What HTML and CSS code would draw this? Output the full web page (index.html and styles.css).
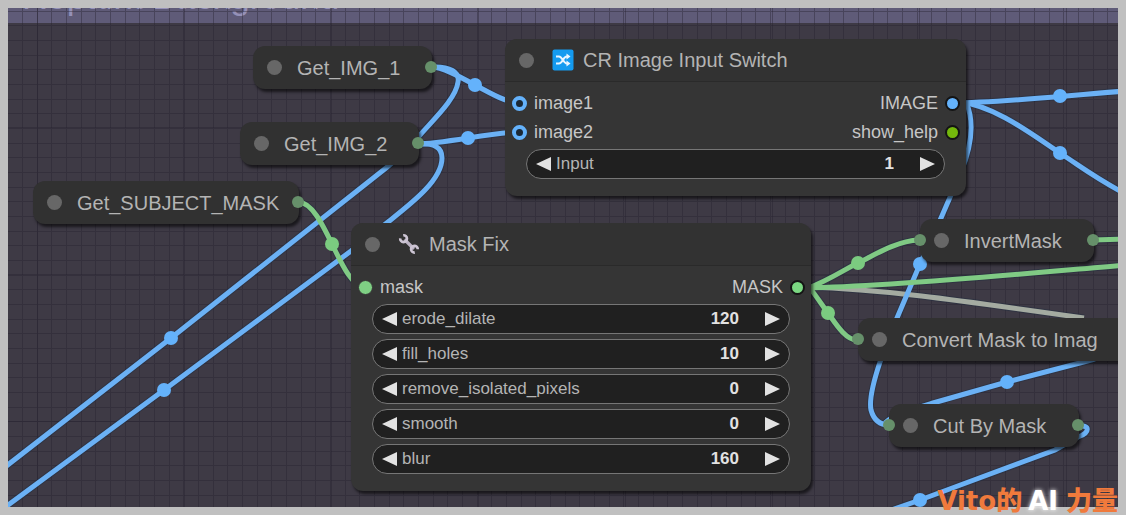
FILE: index.html
```html
<!DOCTYPE html>
<html lang="en">
<head>
<meta charset="utf-8">
<title>Node graph</title>
<link rel="stylesheet" href="styles.css">
</head>
<body>
<main class="canvas">
  <h1 class="group-title">Repaint Background</h1>

  <svg class="links" aria-hidden="true">
    <defs>
      <pattern id="grid" width="44" height="44" x="22" y="40" patternUnits="userSpaceOnUse">
        <path class="grid-line" d="M.5 0V44M15.5 0V44M29.5 0V44M0 .5H44M0 15.5H44M0 29.5H44"/>
      </pattern>
      <pattern id="grid-major" width="147" height="147" x="184" y="127" patternUnits="userSpaceOnUse">
        <path class="grid-line" d="M.5 0V147M0 .5H147"/>
      </pattern>
      <path id="l1" d="M431 67C453 67 497 103 519 103"/>
      <path id="l2" d="M417 144C443 144 493 132 519 132"/>
      <path id="l3" d="M431 67C450 66 460 72 458 82C456 98 436 117 420 135C408 149 396 160 386 168L171 338L0 471"/>
      <path id="l4" d="M417 144C434 143 442 147 442 158C442 180 412 203 388 222L351 251L164 390L0 511"/>
      <path id="l5" d="M952 103C1000 103 1060 96 1126 91"/>
      <path id="l6" d="M960 102C995 106 1030 133 1060 153S1100 181 1126 194"/>
      <path id="l7" d="M966 102C974 120 972 145 961 172L941 218L920 264L897 318L880 362C872 386 869 400 871 410C874 421 881 425 889 425"/>
      <path id="l8" d="M1095 359L1007 382L933 403C910 410 893 415 885 423"/>
      <path id="l9" d="M1077 426C1091 424 1090 433 1078 437L1055 450L920 500L880 514"/>
      <path id="m1" d="M298 202C325 202 340 287 365 287"/>
      <path id="m2" d="M806 289C830 280 845 269 858 263S895 241 919 240"/>
      <path id="m3" d="M806 283C815 294 822 305 828 313S845 340 857 340"/>
      <path id="m4" d="M806 288C900 286 1040 272 1126 265"/>
      <path id="m5" d="M1093 240L1126 239"/>
      <path id="m6" d="M806 287C880 289 950 299 1084 318"/>
    </defs>
    <g transform="translate(-8 -8)">
      <rect class="grid" width="100%" height="100%" x="8" y="8" fill="url(#grid)"/>
      <rect class="grid" width="100%" height="100%" x="8" y="8" fill="url(#grid-major)"/>
      <g class="outline">
        <use href="#l1"/><use href="#l2"/><use href="#l3"/><use href="#l4"/><use href="#l5"/><use href="#l6"/><use href="#l7"/><use href="#l8"/><use href="#l9"/>
        <use href="#m1"/><use href="#m2"/><use href="#m3"/><use href="#m4"/><use href="#m5"/><use href="#m6"/>
      </g>
      <g class="link muted"><use href="#m6"/></g>
      <g class="link image">
        <use href="#l1"/><use href="#l2"/><use href="#l3"/><use href="#l4"/><use href="#l5"/><use href="#l6"/><use href="#l7"/><use href="#l8"/><use href="#l9"/>
      </g>
      <g class="link mask">
        <use href="#m1"/><use href="#m2"/><use href="#m3"/><use href="#m4"/><use href="#m5"/>
      </g>
      <g class="image-dot">
        <circle cx="475" cy="85" r="7"/><circle cx="468" cy="138" r="7"/><circle cx="171" cy="338" r="7"/><circle cx="164" cy="390" r="7"/>
        <circle cx="1060" cy="96" r="7"/><circle cx="1060" cy="153" r="7"/><circle cx="920" cy="264" r="7"/><circle cx="1007" cy="382" r="7"/><circle cx="920" cy="500" r="7"/>
      </g>
      <g class="mask-dot">
        <circle cx="332" cy="244" r="7"/><circle cx="858" cy="263" r="7"/><circle cx="828" cy="313" r="7"/>
      </g>
    </g>
  </svg>

  <section class="node collapsed get-img-1">
    <header class="title"><button class="toggle" aria-label="Expand"></button><h2>Get_IMG_1</h2></header>
    <span class="port out"></span>
  </section>

  <section class="node collapsed get-img-2">
    <header class="title"><button class="toggle" aria-label="Expand"></button><h2>Get_IMG_2</h2></header>
    <span class="port out"></span>
  </section>

  <section class="node collapsed get-subject">
    <header class="title"><button class="toggle" aria-label="Expand"></button><h2>Get_SUBJECT_MASK</h2></header>
    <span class="port out"></span>
  </section>

  <section class="node open switch">
    <header class="title">
      <button class="toggle" aria-label="Collapse"></button>
      <svg class="icon" viewBox="0 0 22 22" aria-hidden="true">
        <rect x="0.500" y="0.500" width="21" height="21" rx="2" fill="#149bf0"/>
        <path d="M4 7.500H7C10.500 7.500 11 14.500 15 14.500H16M4 14.500H7C10.500 14.500 11 7.500 15 7.500H16" fill="none" stroke="#e8f5ff" stroke-width="2"/>
        <path d="M14.500 4.500L18.500 7.500L14.500 10.500ZM14.500 11.500L18.500 14.500L14.500 17.500Z" fill="#e8f5ff"/>
      </svg>
      <h2>CR Image Input Switch</h2>
    </header>
    <div class="slots">
      <div class="slot"><span class="pin ring"></span><span>image1</span><span class="end">IMAGE</span><span class="pin blue"></span></div>
      <div class="slot"><span class="pin ring"></span><span>image2</span><span class="end">show_help</span><span class="pin lime"></span></div>
    </div>
    <div class="widgets">
      <div class="widget">
        <button class="step" aria-label="Decrease Input"><svg viewBox="0 0 15 14"><path d="M15 0V14L0 7Z"/></svg></button>
        <label for="w-input">Input</label><input id="w-input" value="1">
        <button class="step" aria-label="Increase Input"><svg viewBox="0 0 15 14"><path d="M0 0V14L15 7Z"/></svg></button>
      </div>
    </div>
  </section>

  <section class="node open mask-fix">
    <header class="title">
      <button class="toggle" aria-label="Collapse"></button>
      <svg class="icon" viewBox="0 0 22 22" aria-hidden="true">
        <path d="M6.500 6.500L16 16" stroke="#bcb3c4" stroke-width="3.200"/>
        <path d="M5.200 2.300A3.400 3.400 0 1 1 2.200 5.300M19.800 16.200A3.400 3.400 0 1 0 16.800 19.600" fill="none" stroke="#cdc5d4" stroke-width="2.600"/>
      </svg>
      <h2>Mask Fix</h2>
    </header>
    <div class="slots">
      <div class="slot"><span class="pin linked"></span><span>mask</span><span class="end">MASK</span><span class="pin green"></span></div>
    </div>
    <div class="widgets">
      <div class="widget">
        <button class="step" aria-label="Decrease erode_dilate"><svg viewBox="0 0 15 14"><path d="M15 0V14L0 7Z"/></svg></button>
        <label for="w-erode">erode_dilate</label><input id="w-erode" value="120">
        <button class="step" aria-label="Increase erode_dilate"><svg viewBox="0 0 15 14"><path d="M0 0V14L15 7Z"/></svg></button>
      </div>
      <div class="widget">
        <button class="step" aria-label="Decrease fill_holes"><svg viewBox="0 0 15 14"><path d="M15 0V14L0 7Z"/></svg></button>
        <label for="w-fill">fill_holes</label><input id="w-fill" value="10">
        <button class="step" aria-label="Increase fill_holes"><svg viewBox="0 0 15 14"><path d="M0 0V14L15 7Z"/></svg></button>
      </div>
      <div class="widget">
        <button class="step" aria-label="Decrease remove_isolated_pixels"><svg viewBox="0 0 15 14"><path d="M15 0V14L0 7Z"/></svg></button>
        <label for="w-remove">remove_isolated_pixels</label><input id="w-remove" value="0">
        <button class="step" aria-label="Increase remove_isolated_pixels"><svg viewBox="0 0 15 14"><path d="M0 0V14L15 7Z"/></svg></button>
      </div>
      <div class="widget">
        <button class="step" aria-label="Decrease smooth"><svg viewBox="0 0 15 14"><path d="M15 0V14L0 7Z"/></svg></button>
        <label for="w-smooth">smooth</label><input id="w-smooth" value="0">
        <button class="step" aria-label="Increase smooth"><svg viewBox="0 0 15 14"><path d="M0 0V14L15 7Z"/></svg></button>
      </div>
      <div class="widget">
        <button class="step" aria-label="Decrease blur"><svg viewBox="0 0 15 14"><path d="M15 0V14L0 7Z"/></svg></button>
        <label for="w-blur">blur</label><input id="w-blur" value="160">
        <button class="step" aria-label="Increase blur"><svg viewBox="0 0 15 14"><path d="M0 0V14L15 7Z"/></svg></button>
      </div>
    </div>
  </section>

  <section class="node collapsed invert">
    <span class="port in"></span>
    <header class="title"><button class="toggle" aria-label="Expand"></button><h2>InvertMask</h2></header>
    <span class="port out"></span>
  </section>

  <section class="node collapsed convert">
    <span class="port in"></span>
    <header class="title"><button class="toggle" aria-label="Expand"></button><h2>Convert Mask to Imag</h2></header>
  </section>

  <section class="node collapsed cut">
    <span class="port in"></span>
    <header class="title"><button class="toggle" aria-label="Expand"></button><h2>Cut By Mask</h2></header>
    <span class="port out"></span>
  </section>
</main>
<p class="watermark">Vito<span class="han">的</span><span class="light">AI</span><span class="han">力量</span></p>
</body>
</html>
```

FILE: styles.css
```css
* {
  box-sizing: border-box;
}

body {
  margin: 0;
  padding: 8px;
  height: 100vh;
  display: flex;
  position: relative;
  overflow: hidden;
  background: #c0c0c0;
  font-family: "Liberation Sans", Arial, sans-serif;
}

h1,
h2,
p {
  margin: 0;
  font-weight: 400;
}

button,
input {
  border: 0;
  padding: 0;
  background: none;
  font: inherit;
  color: inherit;
}

.canvas {
  flex: 1;
  position: relative;
  overflow: hidden;
  background: #3e3a45;
}

.group-title {
  display: flex;
  align-items: flex-end;
  height: 15px;
  padding: 0 14px 7px;
  overflow: hidden;
  background: #5f5b78;
  color: #9591b8;
  font-size: 35px;
  line-height: 39px;
}

/* links and background grid */
.links {
  position: absolute;
  inset: 0;
  width: 100%;
  height: 100%;
}

.grid-line {
  fill: none;
  stroke: #26222f;
  stroke-width: 1;
}

.grid {
  opacity: 0.4;
}

.outline,
.link {
  fill: none;
  stroke-width: 5;
}

.outline {
  stroke: #1b2b40;
  stroke-width: 7;
  opacity: 0.4;
}

.image {
  stroke: #6bb1f5;
}

.mask {
  stroke: #80ca84;
}

.muted {
  stroke: #a4aba1;
}

.image-dot {
  fill: #64b2fb;
}

.mask-dot {
  fill: #7bcb80;
}

/* nodes */
.node {
  position: absolute;
  border-radius: 12px;
  background: #313131;
  box-shadow: 2px 3px 3px rgba(0, 0, 0, 0.6);
}

.title {
  display: flex;
  align-items: center;
  height: 43px;
  padding-left: 14px;
  color: #b4b4b4;
}

.title h2 {
  font-size: 20px;
  line-height: 24px;
  white-space: nowrap;
}

.toggle {
  flex: none;
  width: 15px;
  height: 15px;
  margin-right: 15px;
  border-radius: 50%;
  background: #676767;
}

.icon {
  flex: none;
  width: 22px;
  height: 22px;
  margin: 0 9px 0 3px;
}

.open {
  background: #353535;
}

.open .title {
  border-bottom: 1px solid #2a2a2a;
  border-radius: 12px 12px 0 0;
  background: #323232;
}

.port {
  position: absolute;
  top: 15px;
  width: 12px;
  height: 12px;
  border-radius: 50%;
  background: #66906a;
}

.port.in {
  left: -6px;
}

.port.out {
  right: -5px;
}

.slots {
  padding: 7px 6px 0 7px;
}

.slot {
  display: flex;
  align-items: center;
  gap: 7px;
  height: 29px;
  color: #c6c6c6;
  font-size: 18px;
}

.end {
  margin-left: auto;
}

.pin {
  width: 15px;
  height: 15px;
  border: 2px solid #141414;
  border-radius: 50%;
}

.ring {
  border: 4px solid #64b2fb;
  background: #1a2836;
}

.blue {
  background: #64b2fb;
}

.lime {
  background: #74b80c;
}

.green {
  background: #7bd882;
}

.linked {
  border: 1px solid #353535;
  background: #7fd084;
}

.widgets {
  display: flex;
  flex-direction: column;
  gap: 5px;
  padding: 2px 21px 17px;
}

.widget {
  display: flex;
  align-items: center;
  height: 30px;
  padding: 0 9px;
  border: 1px solid #767676;
  border-radius: 15px;
  background: #202020;
  color: #b4b4b4;
  font-size: 17px;
}

.widget label {
  flex: none;
  margin-left: 5px;
}

.widget input {
  flex: 1;
  min-width: 0;
  margin-right: 26px;
  color: #e2e2e2;
  font-weight: 700;
  text-align: right;
}

.step {
  display: flex;
  flex: none;
}

.step svg {
  width: 15px;
  height: 14px;
  fill: #e2e2e2;
}

/* placement on the graph */
.get-img-1 {
  left: 245px;
  top: 38px;
  width: 179px;
}

.get-img-2 {
  left: 232px;
  top: 114px;
  width: 179px;
}

.get-subject {
  left: 25px;
  top: 173px;
  width: 266px;
}

.switch {
  left: 497px;
  top: 31px;
  width: 461px;
}

.mask-fix {
  left: 343px;
  top: 215px;
  width: 460px;
}

.invert {
  left: 912px;
  top: 211px;
  width: 174px;
}

.convert {
  left: 850px;
  top: 310px;
  width: 300px;
}

.cut {
  left: 881px;
  top: 396px;
  width: 190px;
}

.watermark {
  position: absolute;
  right: 8px;
  bottom: 2px;
  display: flex;
  align-items: baseline;
  color: #f07a3c;
  font-family: "DejaVu Sans", sans-serif;
  font-size: 26px;
  font-weight: 700;
  line-height: 24px;
}

.han {
  font-family: "Noto Sans CJK SC", sans-serif;
  font-weight: 900;
}

.light {
  margin: 0 8px 0 6px;
  color: #ffffff;
  text-shadow: 0 0 4px #ffffff;
}
```
